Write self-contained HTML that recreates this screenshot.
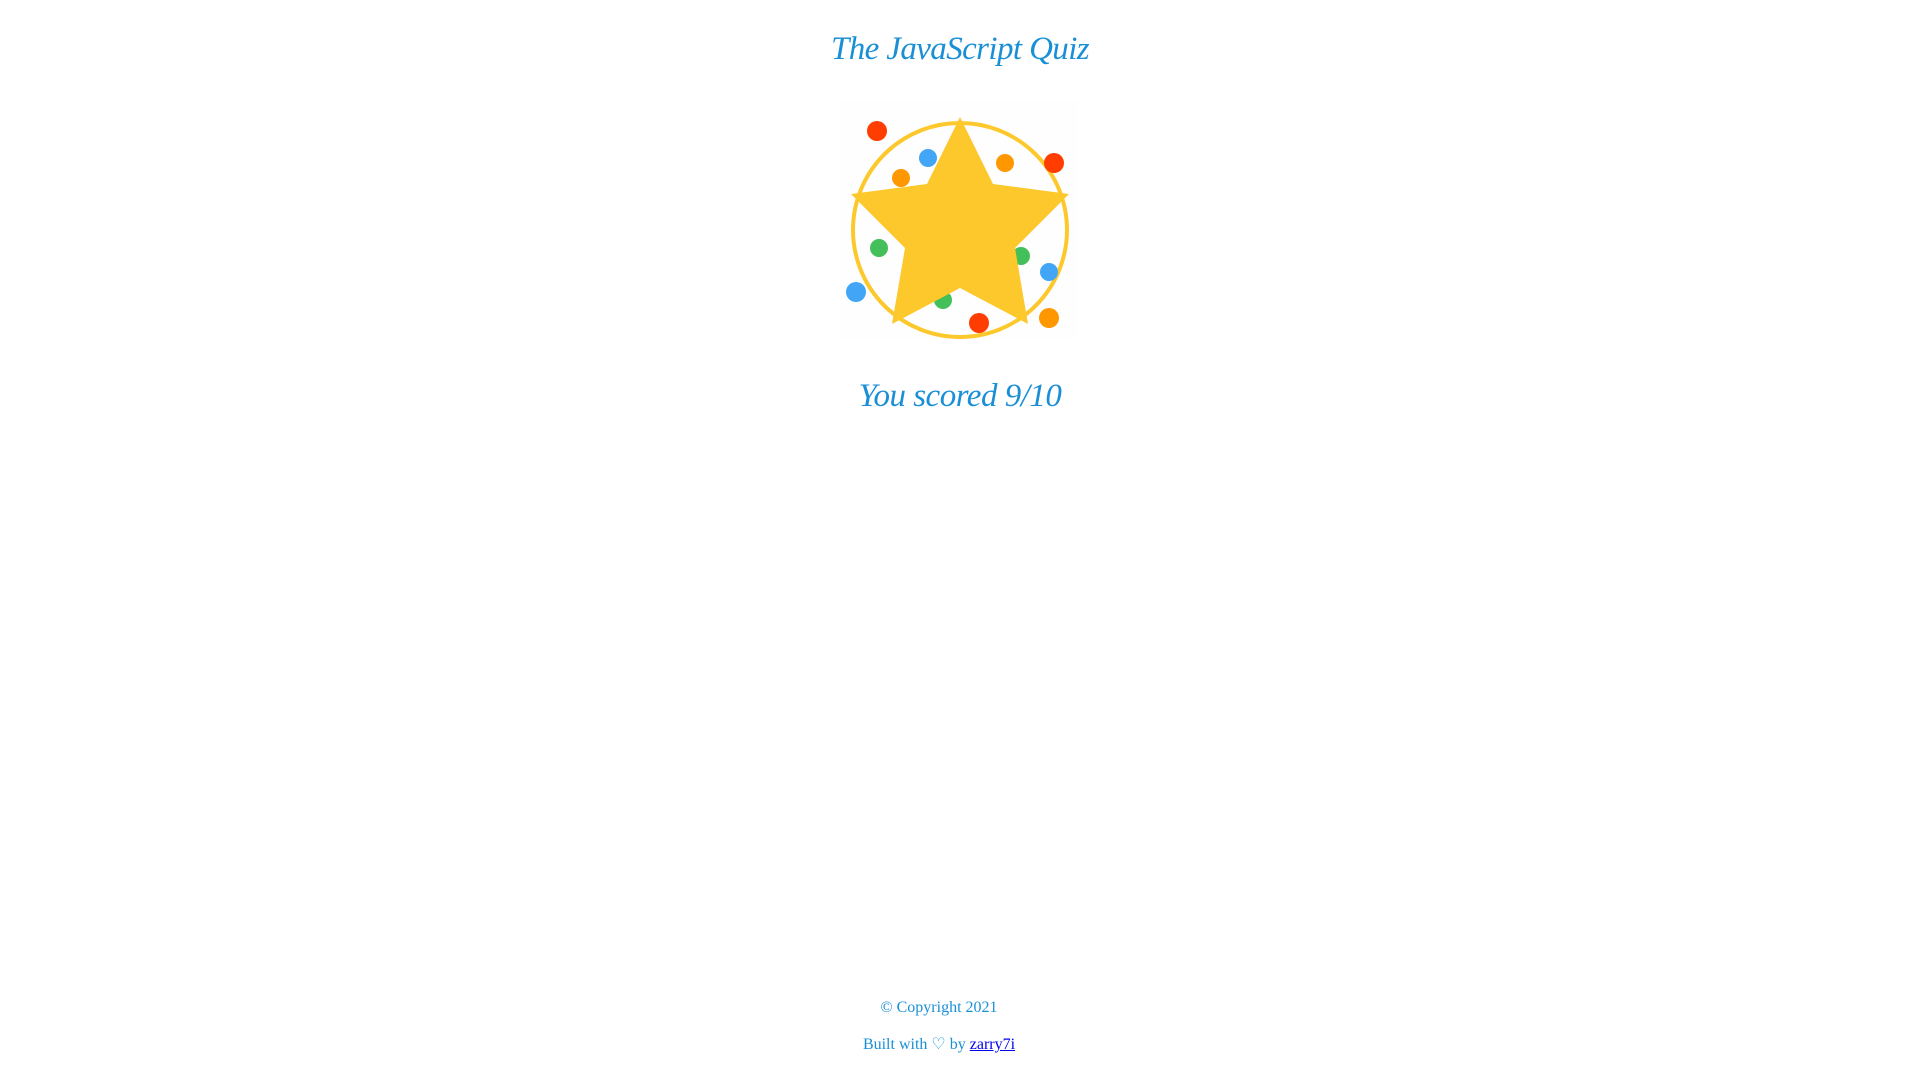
<!DOCTYPE html>
<html><head><meta charset="utf-8"><style>
html,body{margin:0;padding:0;background:#fff;width:1920px;height:1080px;overflow:hidden;position:relative}
.t{position:absolute;left:0;width:1920px;text-align:center;color:#1a8fd6;font-family:"Liberation Serif",serif;font-style:italic}
.f{position:absolute;left:0;width:1920px;text-align:center;color:#1a8fd6;font-family:"Liberation Serif",serif;font-size:16px}
a{color:#0000ee}
</style></head><body>
<div class="t" style="top:31px;font-size:33px;letter-spacing:-0.6px">The JavaScript Quiz</div>
<svg style="position:absolute;left:0;top:0" width="1920" height="400">
<rect x="840" y="100" width="238" height="238" fill="#fefefe"/>
<circle cx="960" cy="230" r="107" fill="none" stroke="#fdc82c" stroke-width="4"/>
<g>
<circle cx="877" cy="131" r="10" fill="#ff3d00"/>
<circle cx="928" cy="158" r="9" fill="#42a5f5"/>
<circle cx="901" cy="178" r="9" fill="#ff9800"/>
<circle cx="1005" cy="163" r="9" fill="#ff9800"/>
<circle cx="1054" cy="163" r="10" fill="#ff3d00"/>
<circle cx="879" cy="248" r="9" fill="#43c059"/>
<circle cx="1021" cy="256" r="9" fill="#43c059"/>
<circle cx="1049" cy="272" r="9" fill="#42a5f5"/>
<circle cx="856" cy="292" r="10" fill="#42a5f5"/>
<circle cx="943" cy="300" r="9" fill="#43c059"/>
<circle cx="979" cy="323" r="10" fill="#ff3d00"/>
<circle cx="1049" cy="318" r="10" fill="#ff9800"/>
</g>
<polygon fill="#fdc82c" points="960,117 993,184 1069,194 1015,248 1028,324 960,288 892,324 905,248 851,194 927,184"/>
</svg>
<div class="t" style="top:378px;font-size:33px;letter-spacing:-0.5px">You scored 9/10</div>
<div class="f" style="top:999px;left:-21px">© Copyright 2021</div>
<div class="f" style="top:1034px;left:-21px">Built with ♡ by <a href="#">zarry7i</a></div>
</body></html>
